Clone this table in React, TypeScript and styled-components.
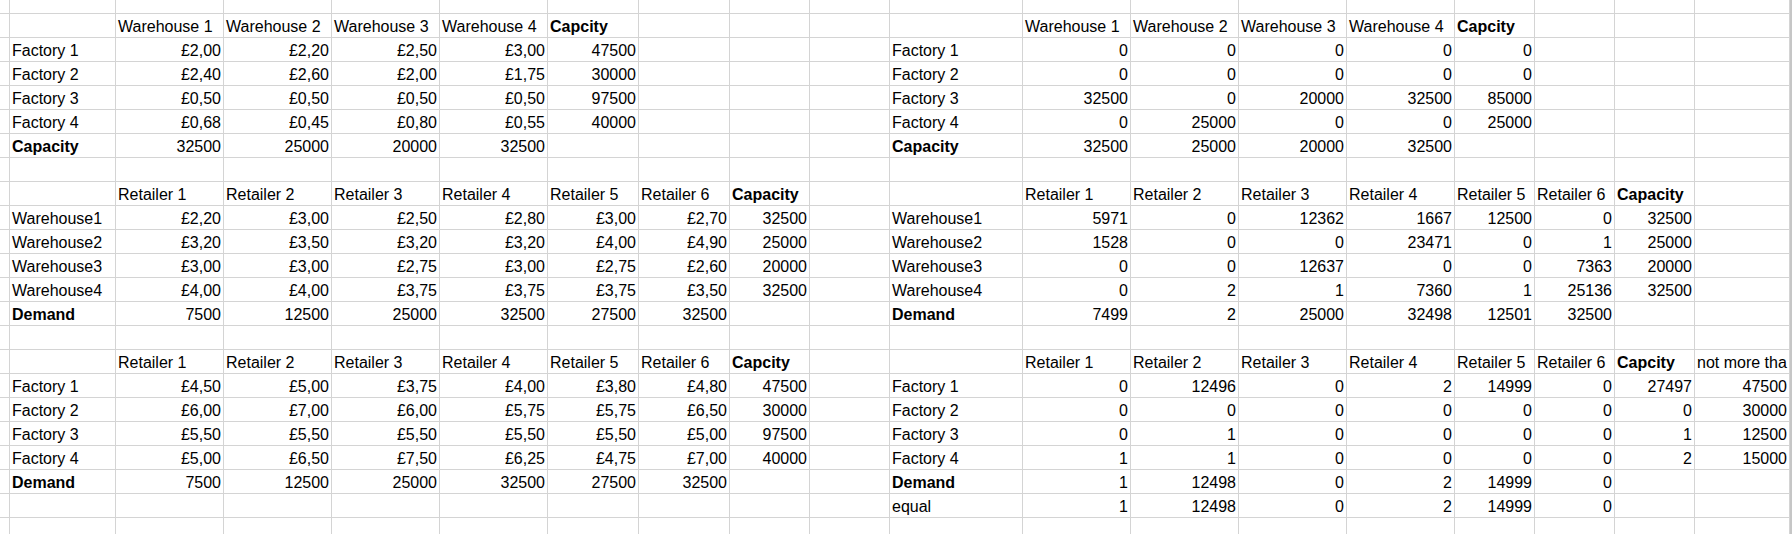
import { Fragment } from 'react';
import styled, { createGlobalStyle } from 'styled-components';

const GlobalStyle = createGlobalStyle`
	html, body {
		margin: 0;
		padding: 0;
		background: #ffffff;
		overflow: hidden;
	}
`;

const COLUMN_WIDTHS = [10, 106, 108, 108, 108, 108, 91, 91, 80, 80, 133, 108, 108, 108, 108, 80, 80, 80, 95];
const LETTERS = 'ABCDEFGHIJKLMNOPQRS'.split('');

type Row = Partial<Record<string, string>>;

// a leading * marks a bold cell
const ROWS: Row[] = [
	{},
	{
		C: 'Warehouse 1', D: 'Warehouse 2', E: 'Warehouse 3', F: 'Warehouse 4', G: '*Capcity',
		L: 'Warehouse 1', M: 'Warehouse 2', N: 'Warehouse 3', O: 'Warehouse 4', P: '*Capcity',
	},
	{
		B: 'Factory 1', C: '£2,00', D: '£2,20', E: '£2,50', F: '£3,00', G: '47500',
		K: 'Factory 1', L: '0', M: '0', N: '0', O: '0', P: '0',
	},
	{
		B: 'Factory 2', C: '£2,40', D: '£2,60', E: '£2,00', F: '£1,75', G: '30000',
		K: 'Factory 2', L: '0', M: '0', N: '0', O: '0', P: '0',
	},
	{
		B: 'Factory 3', C: '£0,50', D: '£0,50', E: '£0,50', F: '£0,50', G: '97500',
		K: 'Factory 3', L: '32500', M: '0', N: '20000', O: '32500', P: '85000',
	},
	{
		B: 'Factory 4', C: '£0,68', D: '£0,45', E: '£0,80', F: '£0,55', G: '40000',
		K: 'Factory 4', L: '0', M: '25000', N: '0', O: '0', P: '25000',
	},
	{
		B: '*Capacity', C: '32500', D: '25000', E: '20000', F: '32500',
		K: '*Capacity', L: '32500', M: '25000', N: '20000', O: '32500',
	},
	{},
	{
		C: 'Retailer 1', D: 'Retailer 2', E: 'Retailer 3', F: 'Retailer 4', G: 'Retailer 5', H: 'Retailer 6', I: '*Capacity',
		L: 'Retailer 1', M: 'Retailer 2', N: 'Retailer 3', O: 'Retailer 4', P: 'Retailer 5', Q: 'Retailer 6', R: '*Capacity',
	},
	{
		B: 'Warehouse1', C: '£2,20', D: '£3,00', E: '£2,50', F: '£2,80', G: '£3,00', H: '£2,70', I: '32500',
		K: 'Warehouse1', L: '5971', M: '0', N: '12362', O: '1667', P: '12500', Q: '0', R: '32500',
	},
	{
		B: 'Warehouse2', C: '£3,20', D: '£3,50', E: '£3,20', F: '£3,20', G: '£4,00', H: '£4,90', I: '25000',
		K: 'Warehouse2', L: '1528', M: '0', N: '0', O: '23471', P: '0', Q: '1', R: '25000',
	},
	{
		B: 'Warehouse3', C: '£3,00', D: '£3,00', E: '£2,75', F: '£3,00', G: '£2,75', H: '£2,60', I: '20000',
		K: 'Warehouse3', L: '0', M: '0', N: '12637', O: '0', P: '0', Q: '7363', R: '20000',
	},
	{
		B: 'Warehouse4', C: '£4,00', D: '£4,00', E: '£3,75', F: '£3,75', G: '£3,75', H: '£3,50', I: '32500',
		K: 'Warehouse4', L: '0', M: '2', N: '1', O: '7360', P: '1', Q: '25136', R: '32500',
	},
	{
		B: '*Demand', C: '7500', D: '12500', E: '25000', F: '32500', G: '27500', H: '32500',
		K: '*Demand', L: '7499', M: '2', N: '25000', O: '32498', P: '12501', Q: '32500',
	},
	{},
	{
		C: 'Retailer 1', D: 'Retailer 2', E: 'Retailer 3', F: 'Retailer 4', G: 'Retailer 5', H: 'Retailer 6', I: '*Capcity',
		L: 'Retailer 1', M: 'Retailer 2', N: 'Retailer 3', O: 'Retailer 4', P: 'Retailer 5', Q: 'Retailer 6', R: '*Capcity',
		S: 'not more tha',
	},
	{
		B: 'Factory 1', C: '£4,50', D: '£5,00', E: '£3,75', F: '£4,00', G: '£3,80', H: '£4,80', I: '47500',
		K: 'Factory 1', L: '0', M: '12496', N: '0', O: '2', P: '14999', Q: '0', R: '27497', S: '47500',
	},
	{
		B: 'Factory 2', C: '£6,00', D: '£7,00', E: '£6,00', F: '£5,75', G: '£5,75', H: '£6,50', I: '30000',
		K: 'Factory 2', L: '0', M: '0', N: '0', O: '0', P: '0', Q: '0', R: '0', S: '30000',
	},
	{
		B: 'Factory 3', C: '£5,50', D: '£5,50', E: '£5,50', F: '£5,50', G: '£5,50', H: '£5,00', I: '97500',
		K: 'Factory 3', L: '0', M: '1', N: '0', O: '0', P: '0', Q: '0', R: '1', S: '12500',
	},
	{
		B: 'Factory 4', C: '£5,00', D: '£6,50', E: '£7,50', F: '£6,25', G: '£4,75', H: '£7,00', I: '40000',
		K: 'Factory 4', L: '1', M: '1', N: '0', O: '0', P: '0', Q: '0', R: '2', S: '15000',
	},
	{
		B: '*Demand', C: '7500', D: '12500', E: '25000', F: '32500', G: '27500', H: '32500',
		K: '*Demand', L: '1', M: '12498', N: '0', O: '2', P: '14999', Q: '0',
	},
	{
		K: 'equal', L: '1', M: '12498', N: '0', O: '2', P: '14999', Q: '0',
	},
	{},
];

const Sheet = styled.div`
	display: grid;
	grid-template-columns: ${COLUMN_WIDTHS.map((w) => `${w}px`).join(' ')} 1fr;
	grid-template-rows: 14px repeat(${ROWS.length - 1}, 24px);
	width: 1792px;
	height: 534px;
	overflow: hidden;
	font-family: 'Liberation Sans', Arial, sans-serif;
	font-size: 16px;
	color: #000000;
`;

const Cell = styled.div<{ $right?: boolean; $bold?: boolean }>`
	box-sizing: border-box;
	border-right: 1px solid #d4d4d4;
	border-bottom: 1px solid #d4d4d4;
	padding: 4px 2px 0;
	line-height: 18px;
	white-space: nowrap;
	overflow: hidden;
	text-align: ${(p) => (p.$right ? 'right' : 'left')};
	font-weight: ${(p) => (p.$bold ? 700 : 400)};
`;

const WindowEdge = styled.div`
	background: #c6c6c6;
`;

const isNumber = (text: string) => /^[£\d]/.test(text);

export default function App() {
	return (
		<>
			<GlobalStyle />
			<Sheet>
				{ROWS.map((row, r) => (
					<Fragment key={r}>
						{LETTERS.map((letter) => {
							const raw = row[letter] ?? '';
							const bold = raw.startsWith('*');
							const text = bold ? raw.slice(1) : raw;
							return (
								<Cell key={letter} $right={isNumber(text)} $bold={bold}>
									{text}
								</Cell>
							);
						})}
						<WindowEdge />
					</Fragment>
				))}
			</Sheet>
		</>
	);
}
